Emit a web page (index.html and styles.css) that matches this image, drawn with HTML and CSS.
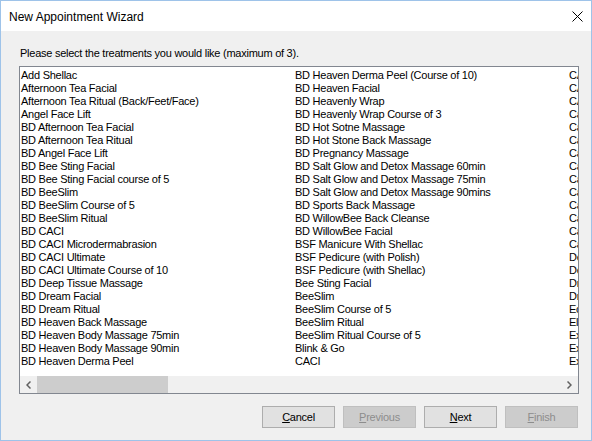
FILE: index.html
```html
<!DOCTYPE html>
<html>
<head>
<meta charset="utf-8">
<title>New Appointment Wizard</title>
<link rel="stylesheet" href="styles.css">
</head>
<body>
<div class="window">
  <div class="titlebar">
    <span class="title">New Appointment Wizard</span>
    <svg class="close" width="11" height="11" viewBox="0 0 11 11"><path d="M0.5 0.5 L10.5 10.5 M10.5 0.5 L0.5 10.5" stroke="#000" stroke-width="1" fill="none"/></svg>
  </div>
  <div class="content">
    <div class="prompt">Please select the treatments you would like (maximum of 3).</div>
    <div class="listbox">
      <div class="list-area">
        <div class="col">
          <div class="item">Add Shellac</div>
          <div class="item">Afternoon Tea Facial</div>
          <div class="item">Afternoon Tea Ritual (Back/Feet/Face)</div>
          <div class="item">Angel Face Lift</div>
          <div class="item">BD Afternoon Tea Facial</div>
          <div class="item">BD Afternoon Tea Ritual</div>
          <div class="item">BD Angel Face Lift</div>
          <div class="item">BD Bee Sting Facial</div>
          <div class="item">BD Bee Sting Facial course of 5</div>
          <div class="item">BD BeeSlim</div>
          <div class="item">BD BeeSlim Course of 5</div>
          <div class="item">BD BeeSlim Ritual</div>
          <div class="item">BD CACI</div>
          <div class="item">BD CACI Microdermabrasion</div>
          <div class="item">BD CACI Ultimate</div>
          <div class="item">BD CACI Ultimate Course of 10</div>
          <div class="item">BD Deep Tissue Massage</div>
          <div class="item">BD Dream Facial</div>
          <div class="item">BD Dream Ritual</div>
          <div class="item">BD Heaven Back Massage</div>
          <div class="item">BD Heaven Body Massage 75min</div>
          <div class="item">BD Heaven Body Massage 90min</div>
          <div class="item">BD Heaven Derma Peel</div>
        </div>
        <div class="col">
          <div class="item">BD Heaven Derma Peel (Course of 10)</div>
          <div class="item">BD Heaven Facial</div>
          <div class="item">BD Heavenly Wrap</div>
          <div class="item">BD Heavenly Wrap Course of 3</div>
          <div class="item">BD Hot Sotne Massage</div>
          <div class="item">BD Hot Stone Back Massage</div>
          <div class="item">BD Pregnancy Massage</div>
          <div class="item">BD Salt Glow and Detox Massage 60min</div>
          <div class="item">BD Salt Glow and Detox Massage 75min</div>
          <div class="item">BD Salt Glow and Detox Massage 90mins</div>
          <div class="item">BD Sports Back Massage</div>
          <div class="item">BD WillowBee Back Cleanse</div>
          <div class="item">BD WillowBee Facial</div>
          <div class="item">BSF Manicure With Shellac</div>
          <div class="item">BSF Pedicure (with Polish)</div>
          <div class="item">BSF Pedicure (with Shellac)</div>
          <div class="item">Bee Sting Facial</div>
          <div class="item">BeeSlim</div>
          <div class="item">BeeSlim Course of 5</div>
          <div class="item">BeeSlim Ritual</div>
          <div class="item">BeeSlim Ritual Course of 5</div>
          <div class="item">Blink &amp; Go</div>
          <div class="item">CACI</div>
        </div>
        <div class="col">
          <div class="item">CACI Course of 10</div>
          <div class="item">CACI Microdermabrasion</div>
          <div class="item">CACI Ultimate</div>
          <div class="item">Callus Peel</div>
          <div class="item">Callus Peel Course of 3</div>
          <div class="item">Candle Massage</div>
          <div class="item">Caviar Facial</div>
          <div class="item">Caviar Facial Course of 5</div>
          <div class="item">Caviar Hand Treatment</div>
          <div class="item">Cavitation</div>
          <div class="item">Cavitation Course of 6</div>
          <div class="item">Cavitation Course of 10</div>
          <div class="item">Cavitation Top Up</div>
          <div class="item">Cavitation Trial</div>
          <div class="item">Deep Tissue Massage</div>
          <div class="item">Dermaplaning</div>
          <div class="item">Dream Facial</div>
          <div class="item">Dream Ritual</div>
          <div class="item">Eco Facial</div>
          <div class="item">Elemis Facial</div>
          <div class="item">Express Facial</div>
          <div class="item">Express Manicure</div>
          <div class="item">Express Pedicure</div>
        </div>
      </div>
      <div class="hscroll">
        <div class="arrow"><svg width="5" height="8" viewBox="0 0 5 8"><path d="M4.5 0.5 L1 4 L4.5 7.5" stroke="#606060" stroke-width="1.5" fill="none"/></svg></div>
        <div class="track"><div class="thumb"></div></div>
        <div class="arrow"><svg width="5" height="8" viewBox="0 0 5 8"><path d="M0.5 0.5 L4 4 L0.5 7.5" stroke="#606060" stroke-width="1.5" fill="none"/></svg></div>
      </div>
    </div>
    <div class="buttons">
      <div class="btn"><span><u>C</u>ancel</span></div>
      <div class="btn disabled"><span><u>P</u>revious</span></div>
      <div class="btn"><span><u>N</u>ext</span></div>
      <div class="btn disabled"><span><u>F</u>inish</span></div>
    </div>
  </div>
</div>
</body>
</html>
```
FILE: styles.css
```css
html, body {
  margin: 0;
  padding: 0;
}
body {
  width: 592px;
  height: 441px;
  overflow: hidden;
  font-family: "Liberation Sans", Arial, sans-serif;
  font-size: 11px;
  letter-spacing: -0.25px;
  color: #000;
  background: #f0f0f0;
}
.window {
  box-sizing: border-box;
  width: 592px;
  height: 441px;
  border: 1px solid #9ec3e9;
  background: #f0f0f0;
  display: flex;
  flex-direction: column;
}
.titlebar {
  height: 30px;
  flex: 0 0 30px;
  background: #fff;
  display: flex;
  align-items: center;
  justify-content: space-between;
  padding: 0 8px 0 8px;
}
.title {
  font-family: "Liberation Sans", Arial, sans-serif;
  font-size: 12px;
  letter-spacing: 0;
  color: #000;
  padding-top: 1px;
}
.close {
  display: block;
  margin-top: 1px;
}
.content {
  flex: 1;
  display: flex;
  flex-direction: column;
  padding: 16px 12px 0 18px;
}
.prompt {
  line-height: 13px;
  padding-left: 1px;
  white-space: nowrap;
}
.listbox {
  margin-top: 6px;
  height: 328px;
  box-sizing: border-box;
  border: 1px solid #828790;
  background: #fff;
  display: flex;
  flex-direction: column;
}
.list-area {
  flex: 1;
  overflow: hidden;
  display: flex;
  padding: 2px 0 0 1px;
}
.col {
  flex: 0 0 274px;
  white-space: nowrap;
}
.item {
  height: 13px;
  line-height: 13px;
}
.hscroll {
  height: 17px;
  flex: 0 0 17px;
  display: flex;
  background: #f0f0f0;
}
.arrow {
  width: 17px;
  display: flex;
  align-items: center;
  justify-content: center;
}
.arrow svg {
  display: block;
}
.track {
  flex: 1;
}
.thumb {
  width: 131px;
  height: 100%;
  background: #cdcdcd;
}
.buttons {
  display: flex;
  justify-content: flex-end;
  gap: 8px;
  margin-top: 12px;
  padding-right: 1px;
}
.btn {
  width: 73px;
  height: 22px;
  box-sizing: border-box;
  border: 1px solid #adadad;
  background: #e1e1e1;
  display: flex;
  align-items: center;
  justify-content: center;
}
.btn.disabled {
  background: #cccccc;
  border-color: #bfbfbf;
  color: #8d8d8d;
}
```
